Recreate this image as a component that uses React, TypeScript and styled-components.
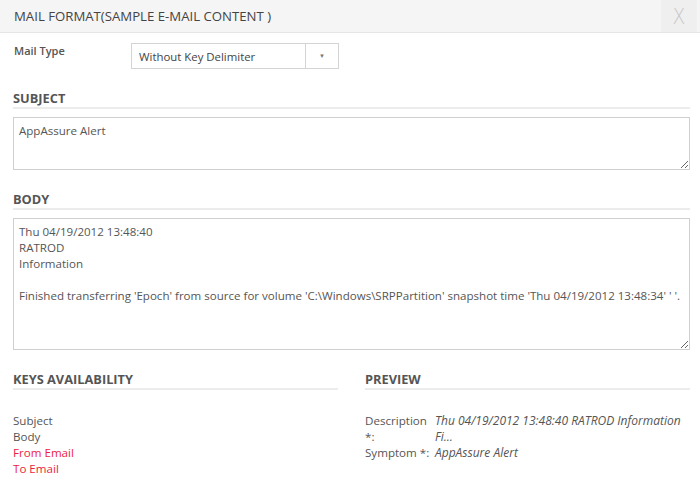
import React from 'react';
import styled, { createGlobalStyle } from 'styled-components';

const GlobalStyle = createGlobalStyle`
  html, body {
    margin: 0;
    padding: 0;
    background: #fff;
  }
  body {
    font-family: 'Open Sans', 'Liberation Sans', sans-serif;
    color: #555;
  }
`;

function App() {
  return (
    <>
      <GlobalStyle />
      <Dialog>
        <Header>
          <Title>MAIL FORMAT(SAMPLE E-MAIL CONTENT )</Title>
          <CloseButton>X</CloseButton>
        </Header>

        <Content>
          <TypeRow>
            <FieldLabel>Mail Type</FieldLabel>
            <Select>
              <SelectValue>Without Key Delimiter</SelectValue>
              <SelectArrow>▼</SelectArrow>
            </Select>
          </TypeRow>

          <Section>
            <SectionTitle>SUBJECT</SectionTitle>
            <TextBox $height={53} readOnly defaultValue="AppAssure Alert" />
          </Section>

          <Section>
            <SectionTitle>BODY</SectionTitle>
            <TextBox
              $height={132}
              readOnly
              defaultValue={
                "Thu 04/19/2012 13:48:40\nRATROD\nInformation\n\nFinished transferring 'Epoch' from source for volume 'C:\\Windows\\SRPPartition' snapshot time 'Thu 04/19/2012 13:48:34' ' '."
              }
            />
          </Section>

          <Columns>
            <Column>
              <SectionTitle>KEYS AVAILABILITY</SectionTitle>
              <KeyList>
                <KeyItem>Subject</KeyItem>
                <KeyItem>Body</KeyItem>
                <KeyItem $missing>From Email</KeyItem>
                <KeyItem $missing>To Email</KeyItem>
              </KeyList>
            </Column>
            <Column>
              <SectionTitle>PREVIEW</SectionTitle>
              <PreviewGrid>
                <PreviewLabel>Description *:</PreviewLabel>
                <PreviewValue>Thu 04/19/2012 13:48:40 RATROD Information Fi...</PreviewValue>
                <PreviewLabel>Symptom *:</PreviewLabel>
                <PreviewValue>AppAssure Alert</PreviewValue>
              </PreviewGrid>
            </Column>
          </Columns>
        </Content>
      </Dialog>
    </>
  );
}

const Dialog = styled.div`
  width: 700px;
  height: 495px;
  background: #fff;
  overflow: hidden;
`;

const Header = styled.div`
  display: flex;
  align-items: stretch;
  height: 32px;
  background: #f5f5f5;
  border-bottom: 1px solid #e6e6e6;
`;

const Title = styled.div`
  flex: 1;
  padding-left: 14px;
  line-height: 33px;
  font-size: 13.2px;
  color: #444;
`;

const CloseButton = styled.div`
  width: 42px;
  background: #efefef;
  color: #c8c8c8;
  font-family: 'DejaVu Sans', sans-serif;
  font-size: 22px;
  font-weight: 200;
  line-height: 34px;
  text-align: center;
  transform: scaleX(0.85);
`;

const Content = styled.div`
  padding: 10px 10px 0 13px;
`;

const TypeRow = styled.div`
  display: flex;
  align-items: flex-start;
`;

const FieldLabel = styled.div`
  width: 117px;
  padding-left: 1px;
  font-size: 11px;
  font-weight: 600;
  color: #555;
  line-height: 16px;
`;

const Select = styled.div`
  display: flex;
  width: 206px;
  height: 24px;
  border: 1px solid #d4d4d4;
  background: #fff;
`;

const SelectValue = styled.div`
  flex: 1;
  padding-left: 7px;
  font-size: 11.4px;
  line-height: 26px;
  color: #444;
  border-right: 1px solid #d4d4d4;
`;

const SelectArrow = styled.div`
  width: 32px;
  text-align: center;
  font-size: 6px;
  line-height: 24px;
  color: #777;
`;

const Section = styled.div`
  margin-top: 21px;
`;

const SectionTitle = styled.div`
  font-size: 12.8px;
  font-weight: 700;
  color: #555;
  line-height: 16px;
  padding-top: 0;
  padding-bottom: 1px;
  border-bottom: 2px solid #ececec;
  margin-bottom: 8px;
`;

const TextBox = styled.textarea<{ $height: number }>`
  display: block;
  box-sizing: border-box;
  width: 677px;
  height: ${(p) => p.$height}px;
  margin: 0;
  padding: 5px 0 5px 5px;
  border: 1px solid #cfcfcf;
  font-family: 'Open Sans', 'Liberation Sans', sans-serif;
  font-size: 11.55px;
  line-height: 16px;
  color: #555;
  resize: vertical;
  outline: none;
  overflow: hidden;
`;

const Columns = styled.div`
  display: grid;
  grid-template-columns: 325px 325px;
  column-gap: 27px;
  margin-top: 21px;
`;

const Column = styled.div``;

const KeyList = styled.div`
  padding-top: 15px;
`;

const KeyItem = styled.div<{ $missing?: boolean }>`
  font-size: 11.6px;
  line-height: 16px;
  color: ${(p) => (p.$missing ? '#ee1c3e' : '#555')};
`;

const PreviewGrid = styled.div`
  display: grid;
  grid-template-columns: 70px 1fr;
  padding-top: 15px;
  font-size: 11.6px;
  line-height: 16px;
`;

const PreviewLabel = styled.div`
  color: #555;
`;

const PreviewValue = styled.div`
  font-size: 12px;
  font-style: italic;
  color: #555;
`;

export default App;
